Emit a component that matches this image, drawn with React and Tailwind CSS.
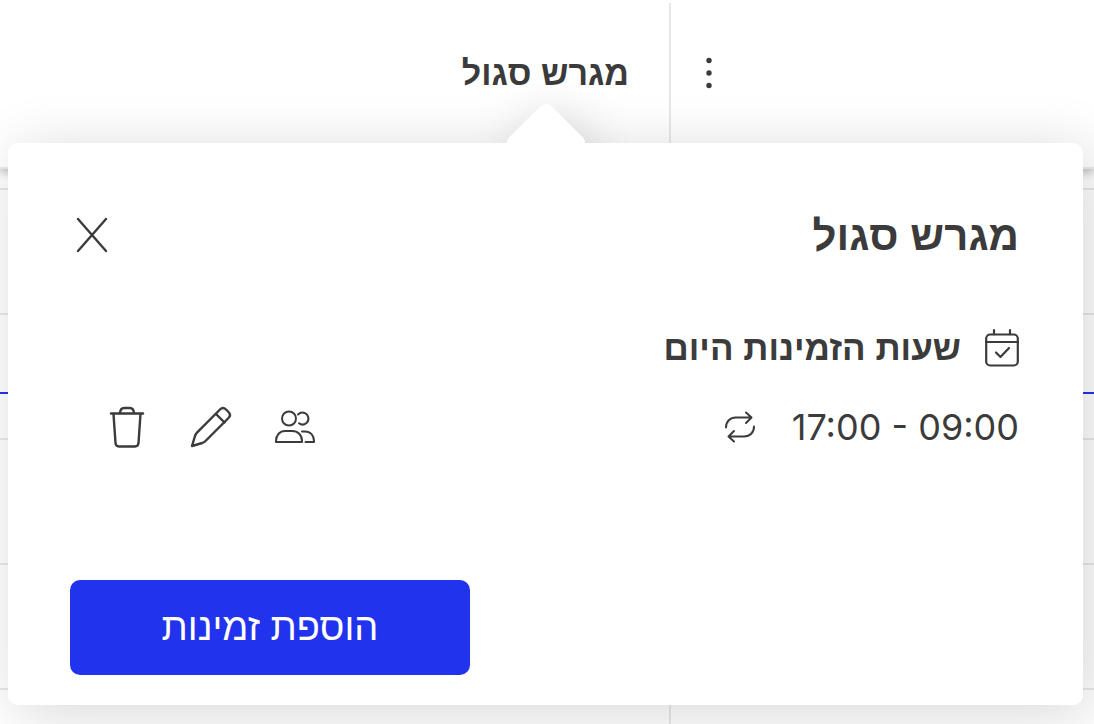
import React, { useState } from "react";

const hours = [0, 1, 2, 3, 4];

const CloseIcon = () => (
  <svg width="32" height="36" viewBox="0 0 32 36" fill="none" stroke="currentColor" strokeWidth="2.4" strokeLinecap="round">
    <path d="M2 2 30 34M30 2 2 34" />
  </svg>
);

const CalendarIcon = () => (
  <svg width="34" height="38" viewBox="0 0 34 38" fill="none" stroke="currentColor" strokeWidth="2.2" strokeLinecap="round" strokeLinejoin="round">
    <rect x="1.200" y="5.500" width="31.600" height="31" rx="4" />
    <path d="M1 13h32M9 1.200v4M25 1.200v4M11 23.500l4.500 4.500 8.500-9" />
  </svg>
);

const RepeatIcon = () => (
  <svg width="32" height="32" viewBox="0 0 32 32" fill="none" stroke="currentColor" strokeWidth="2" strokeLinecap="round" strokeLinejoin="round">
    <path d="M2 16.500C2 10.500 6 6.500 12 6.500h15M22 1.500l5.500 5L22 12" />
    <path d="M30 15.500c0 6-4 10-10 10H5M10 20l-5.500 5.500 5.500 5" />
  </svg>
);

const PeopleIcon = () => (
  <svg width="40" height="40" viewBox="0 0 40 40" fill="none" stroke="currentColor" strokeWidth="2" strokeLinecap="round" strokeLinejoin="round">
    <circle cx="14" cy="11.500" r="7" />
    <path d="M1 35v-1c0-6 4-10 9-10h7c6 0 10 4 10 10v1z" />
    <path d="M23 7.500c2-2 5-2.300 7-1.300 4 2 4.500 7.500 1.500 9.800-2.500 2-5.500 1.800-7.500.300" />
    <path d="M27 24.500h3c5.500 0 9 4 9 9.500v1h-8.500" />
  </svg>
);

const PencilIcon = () => (
  <svg width="42" height="42" viewBox="0 0 42 42" fill="none" stroke="currentColor" strokeWidth="2.4" strokeLinecap="round" strokeLinejoin="round">
    <path d="M2 40 5 30c.500-1.500 1-2.300 2-3.300L30 3.500c2-2 4-2 6 0l2.500 2.500c2 2 2 4 0 6L15.500 35c-1 1-2 1.500-3.300 2z" />
    <path d="m26 8 8.500 8.500" />
  </svg>
);

const TrashIcon = () => (
  <svg width="36" height="42" viewBox="0 0 36 42" fill="none" stroke="currentColor" strokeWidth="2.4" strokeLinecap="round" strokeLinejoin="round">
    <path d="M2 7.500h32" />
    <path d="M11 7c.300-3.500 1.500-5 4-5h6c2.500 0 3.700 1.500 4 5" />
    <path d="m4.500 8 2 29c.200 2.300 1.300 3.500 3.500 3.500h16c2.200 0 3.300-1.200 3.500-3.500l2-29" />
  </svg>
);

const IconButton = ({ label, onClick, children }) => (
  <button type="button" aria-label={label} onClick={onClick} className="flex h-11 w-11 cursor-pointer items-center justify-center">
    {children}
  </button>
);

const Schedule = () => (
  <div className="relative flex min-h-screen flex-col">
    <header className="relative flex h-[169px] border-b-2 border-[#ebebeb] bg-white pt-[3px] shadow-[0_4px_8px_rgba(0,0,0,0.24)]">
      <div className="flex w-[38.85%] justify-end border-l-2 border-[#e8e8e8] pl-4">
        <div className="flex h-[140px] items-center">
          <IconButton label="אפשרויות">
            <svg width="8" height="32" viewBox="0 0 8 32" fill="currentColor">
              <circle cx="4" cy="3.500" r="2.700" />
              <circle cx="4" cy="16" r="2.700" />
              <circle cx="4" cy="28.500" r="2.700" />
            </svg>
          </IconButton>
        </div>
      </div>
      <div className="flex h-[140px] flex-1 items-center pr-10">
        <h1 className="text-[34px] font-bold">מגרש סגול</h1>
      </div>
    </header>

    <main className="flex flex-1">
      <div className="w-[38.85%] border-l-2 border-[#e8e8e8] pt-[19px]">
        {hours.map((hour) => (
          <div key={hour} className="h-[125px] border-t-2 border-[#e8e8e8]" />
        ))}
      </div>
      <div className="flex-1 pt-[19px]">
        {hours.map((hour) => (
          <div key={hour} className="h-[125px] border-t-2 border-[#e8e8e8]" />
        ))}
      </div>
    </main>

    {/* current time */}
    <div className="absolute inset-x-0 top-[392px] h-0.5 bg-[#2233ee]" />
  </div>
);

const AvailabilityPopover = ({ onClose }) => (
  <div role="dialog" aria-labelledby="court-name" className="absolute inset-x-0 top-[143px] mr-[11px] ml-2 rounded-[10px] bg-white shadow-[8px_8px_60px_rgba(0,0,0,0.16)]">
    <div className="absolute -top-[30px] left-1/2 h-[60px] w-[60px] -translate-x-1/2 rotate-45 rounded-lg bg-white shadow-[10px_0_50px_rgba(0,0,0,0.16)]" />

    <div className="relative rounded-[10px] bg-white pt-16 pr-16 pb-[30px] pl-[62px]">
      <div className="flex h-14 items-center justify-between">
        <h2 id="court-name" className="text-[42px] font-bold">מגרש סגול</h2>
        <IconButton label="סגירה" onClick={onClose}>
          <CloseIcon />
        </IconButton>
      </div>

      <div className="mt-[57px] flex h-14 items-center gap-6">
        <CalendarIcon />
        <h3 className="text-[35px] font-bold">שעות הזמינות היום</h3>
      </div>

      <div className="mt-[23px] flex h-14 items-center justify-between pl-[35px]">
        <div className="flex items-center gap-9">
          <span dir="ltr" className="font-['Inter',sans-serif] text-[36px]">17:00 - 09:00</span>
          <RepeatIcon />
        </div>
        <div className="flex gap-10">
          <IconButton label="משתתפים">
            <PeopleIcon />
          </IconButton>
          <IconButton label="עריכה">
            <PencilIcon />
          </IconButton>
          <IconButton label="מחיקה">
            <TrashIcon />
          </IconButton>
        </div>
      </div>

      <div className="mt-[125px] flex justify-end">
        <button type="button" className="h-[95px] w-[400px] cursor-pointer rounded-[10px] bg-[#2233ee] text-[38px] text-white">
          הוספת זמינות
        </button>
      </div>
    </div>
  </div>
);

const App = () => {
  const [open, setOpen] = useState(true);

  return (
    <div dir="rtl" className="relative h-screen overflow-hidden bg-white font-['Liberation_Sans',sans-serif] text-[#3b3b3b]">
      <Schedule />
      {open && <AvailabilityPopover onClose={() => setOpen(false)} />}
    </div>
  );
};

export default App;
